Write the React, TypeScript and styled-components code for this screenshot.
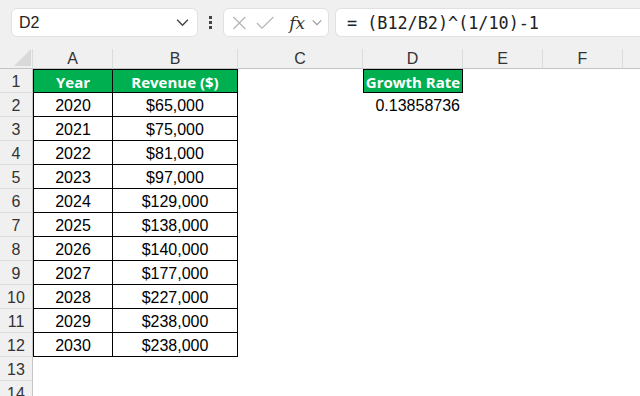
import React from 'react'
import styled, { createGlobalStyle } from 'styled-components'

const Global = createGlobalStyle`
	html, body {
		margin: 0;
		padding: 0;
		background: #ffffff;
		overflow: hidden;
	}
	body {
		font-family: 'Liberation Sans', Arial, sans-serif;
	}
`

const Page = styled.div`
	width: 640px;
	height: 396px;
	overflow: hidden;
	background: #ffffff;
`

const Toolbar = styled.div`
	display: flex;
	align-items: center;
	height: 49px;
	padding: 0 0 4px 11px;
	box-sizing: border-box;
	background: #f0f0f0;
`

const NameBox = styled.div`
	display: flex;
	align-items: center;
	justify-content: space-between;
	width: 187px;
	height: 29px;
	box-sizing: border-box;
	padding: 0 7px 0 7px;
	background: #fff;
	border: 1px solid #e1e1e1;
	border-radius: 6px;
	font-size: 16px;
	color: #222;
`

const Dots = styled.div`
	display: flex;
	flex-direction: column;
	gap: 2px;
	margin: 0 11px 0 11px;
	& span {
		width: 3px;
		height: 3px;
		background: #444;
	}
`

const FxBox = styled.div`
	display: flex;
	align-items: center;
	gap: 9px;
	width: 106px;
	height: 29px;
	box-sizing: border-box;
	padding: 0 5px 0 8px;
	background: #fff;
	border: 1px solid #e1e1e1;
	border-radius: 6px;
`

const Fx = styled.span`
	font-family: 'DejaVu Serif', 'Liberation Serif', serif;
	font-style: italic;
	font-size: 17px;
	color: #333;
	margin-left: 6px;
	margin-right: -3px;
`

const FormulaBox = styled.div`
	flex: 1;
	display: flex;
	align-items: center;
	height: 29px;
	margin-left: 6px;
	box-sizing: border-box;
	padding-left: 11px;
	background: #fff;
	border: 1px solid #e1e1e1;
	border-right: none;
	border-radius: 6px 0 0 6px;
	font-family: 'DejaVu Sans Mono', 'Liberation Mono', monospace;
	font-size: 16.8px;
	color: #222;
	white-space: pre;
`

const Sheet = styled.div`
	display: grid;
	grid-template-columns: 33px 80px 125px 125px 100px 80px 80px 40px;
	grid-template-rows: 20px;
	grid-auto-rows: 24px;
`

const Corner = styled.div`
	position: relative;
	background: #f0f0f0;
	border-bottom: 1px solid #c4c4c4;
	border-right: 1px solid #dcdcdc;
	box-sizing: border-box;
	&::after {
		content: '';
		position: absolute;
		right: 1px;
		bottom: 2px;
		width: 0;
		height: 0;
		border-left: 17px solid transparent;
		border-bottom: 17px solid #d9d9d9;
	}
`

const ColHead = styled.div`
	display: flex;
	align-items: center;
	justify-content: center;
	background: #f0f0f0;
	border-bottom: 1px solid #c4c4c4;
	border-right: 1px solid #dcdcdc;
	box-sizing: border-box;
	font-size: 16px;
	color: #333;
`

const RowHead = styled.div`
	display: flex;
	align-items: center;
	justify-content: center;
	padding-top: 2px;
	background: #f0f0f0;
	border-bottom: 1px solid #dcdcdc;
	border-right: 1px solid #c4c4c4;
	box-sizing: border-box;
	font-size: 16px;
	color: #333;
`

const Cell = styled.div<{ $head?: boolean; $boxed?: boolean; $left?: boolean; $top?: boolean; $align?: string }>`
	display: flex;
	align-items: center;
	justify-content: ${p => p.$align || 'center'};
	box-sizing: border-box;
	padding: 2px 3px 0;
	font-size: 16px;
	color: #000;
	white-space: nowrap;
	background: ${p => (p.$head ? '#00b050' : '#fff')};
	${p => p.$head && `
		color: #fff;
		font-weight: bold;
		font-size: 15px;
		padding-top: 1px;
		font-family: 'Open Sans', 'Liberation Sans', sans-serif;
	`}
	${p => p.$boxed && `
		border-right: 1px solid #000;
		border-bottom: 1px solid #000;
	`}
	${p => p.$left && 'border-left: 1px solid #000;'}
	${p => p.$top && 'border-top: 1px solid #000;'}
`

const columns = ['A', 'B', 'C', 'D', 'E', 'F', '']

const data: [string, string][] = [
	['2020', '$65,000'],
	['2021', '$75,000'],
	['2022', '$81,000'],
	['2023', '$97,000'],
	['2024', '$129,000'],
	['2025', '$138,000'],
	['2026', '$140,000'],
	['2027', '$177,000'],
	['2028', '$227,000'],
	['2029', '$238,000'],
	['2030', '$238,000'],
]

const Chevron = ({ color = '#444', size = 14 }: { color?: string; size?: number }) => (
	<svg width={size} height={size} viewBox="0 0 14 14" fill="none">
		<path d="M2 4.5 L7 9.5 L12 4.5" stroke={color} strokeWidth="1.3" />
	</svg>
)

function Blank() {
	return (
		<>
			<Cell />
			<Cell />
			<Cell />
			<Cell />
			<Cell />
		</>
	)
}

const App = () => (
	<Page>
		<Global />
		<Toolbar>
			<NameBox>
				<span>D2</span>
				<Chevron size={15} />
			</NameBox>
			<Dots>
				<span />
				<span />
				<span />
			</Dots>
			<FxBox>
				<svg width="16" height="16" viewBox="0 0 16 16" fill="none">
					<path d="M1.5 1.5 L14.5 14.5 M14.5 1.5 L1.5 14.5" stroke="#b5b5b5" strokeWidth="1.3" />
				</svg>
				<svg width="20" height="16" viewBox="0 0 20 16" fill="none">
					<path d="M1 8 L6.5 13.5 L19 1.5" stroke="#b5b5b5" strokeWidth="1.3" />
				</svg>
				<Fx>fx</Fx>
				<Chevron color="#999" size={13} />
			</FxBox>
			<FormulaBox>{'= (B12/B2)^(1/10)-1'}</FormulaBox>
		</Toolbar>
		<Sheet>
			<Corner />
			{columns.map((c, i) => (
				<ColHead key={i}>{c}</ColHead>
			))}

			<RowHead>1</RowHead>
			<Cell $head $boxed $left $top>Year</Cell>
			<Cell $head $boxed $top>Revenue ($)</Cell>
			<Cell />
			<Cell $head $boxed $left $top>Growth Rate</Cell>
			<Cell />
			<Cell />
			<Cell />

			{data.map(([year, rev], i) => (
				<React.Fragment key={year}>
					<RowHead>{i + 2}</RowHead>
					<Cell $boxed $left>{year}</Cell>
					<Cell $boxed>{rev}</Cell>
					{i === 0 ? (
						<>
							<Cell />
							<Cell $align="flex-end">0.13858736</Cell>
							<Cell />
							<Cell />
							<Cell />
						</>
					) : (
						<Blank />
					)}
				</React.Fragment>
			))}

			{[13, 14].map(n => (
				<React.Fragment key={n}>
					<RowHead>{n}</RowHead>
					<Cell />
					<Cell />
					<Blank />
				</React.Fragment>
			))}
		</Sheet>
	</Page>
)

export default App
